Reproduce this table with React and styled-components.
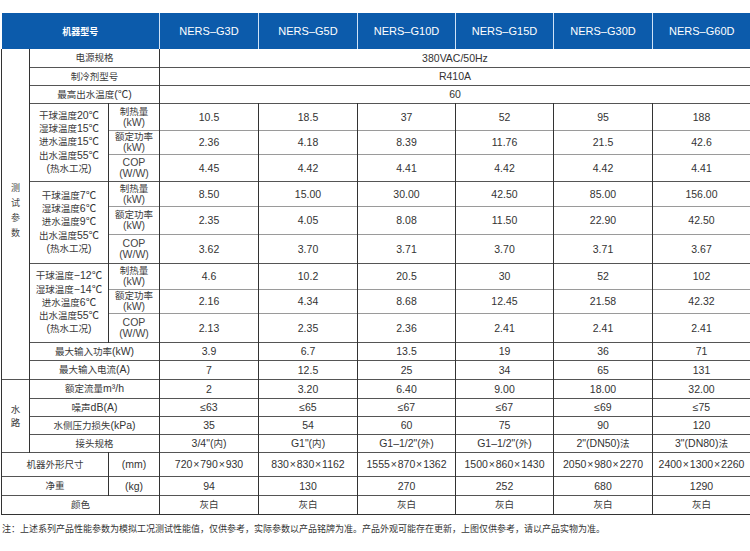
import styled, { createGlobalStyle } from "styled-components";

const GlobalStyle = createGlobalStyle`
  html, body {
    margin: 0;
    padding: 0;
    background: #fff;
    overflow: hidden;
  }
  body {
    font-family: "Liberation Sans", "Noto Sans CJK SC", sans-serif;
    color: #333;
  }
`;

const MODELS = ["NERS–G3D", "NERS–G5D", "NERS–G10D", "NERS–G15D", "NERS–G30D", "NERS–G60D"];

const COND_LINES = [
  ["干球温度20℃", "湿球温度15℃", "进水温度15℃", "出水温度55℃", "(热水工况)"],
  ["干球温度7℃", "湿球温度6℃", "进水温度9℃", "出水温度55℃", "(热水工况)"],
  ["干球温度−12℃", "湿球温度−14℃", "进水温度6℃", "出水温度55℃", "(热水工况)"],
];

const SUB = [
  ["制热量", "(kW)"],
  ["额定功率", "(kW)"],
  ["COP", "(W/W)"],
];

// values per test group, each row is one sub-row, 6 models
const GROUPS = [
  {
    heights: [27, 24, 27],
    rows: [
      ["10.5", "18.5", "37", "52", "95", "188"],
      ["2.36", "4.18", "8.39", "11.76", "21.5", "42.6"],
      ["4.45", "4.42", "4.41", "4.42", "4.42", "4.41"],
    ],
  },
  {
    heights: [25, 28, 29],
    rows: [
      ["8.50", "15.00", "30.00", "42.50", "85.00", "156.00"],
      ["2.35", "4.05", "8.08", "11.50", "22.90", "42.50"],
      ["3.62", "3.70", "3.71", "3.70", "3.71", "3.67"],
    ],
  },
  {
    heights: [26, 24, 29],
    rows: [
      ["4.6", "10.2", "20.5", "30", "52", "102"],
      ["2.16", "4.34", "8.68", "12.45", "21.58", "42.32"],
      ["2.13", "2.35", "2.36", "2.41", "2.41", "2.41"],
    ],
  },
];

const WATER = [
  { label: "额定流量m³/h", h: 19, values: ["2", "3.20", "6.40", "9.00", "18.00", "32.00"] },
  { label: "噪声dB(A)", h: 18, values: ["≤63", "≤65", "≤67", "≤67", "≤69", "≤75"] },
  { label: "水侧压力损失(kPa)", h: 18, values: ["35", "54", "60", "75", "90", "120"] },
  {
    label: "接头规格",
    h: 18,
    values: ["3/4\"(内)", "G1\"(内)", "G1–1/2\"(外)", "G1–1/2\"(外)", "2\"(DN50)法", "3\"(DN80)法"],
  },
];

const SIZES = [
  [720, 790, 930],
  [830, 830, 1162],
  [1555, 870, 1362],
  [1500, 860, 1430],
  [2050, 980, 2270],
  [2400, 1300, 2260],
];

const COL_WIDTHS = [28, 79, 51, 99, 99, 98, 98, 99, 98];

// chinese runs are set a bit smaller than the latin digits, like the print
function mix(text) {
  return text.split(/([\u3000-\u9fff\uff00-\uffef]+)/).map((part, i) =>
    i % 2 === 1 ? <Han key={i}>{part}</Han> : part
  );
}

export default function App() {
  return (
    <Page>
      <GlobalStyle />
      <Table>
        <colgroup>
          {COL_WIDTHS.map((w, i) => (
            <col key={i} style={{ width: w }} />
          ))}
        </colgroup>
        <thead>
          <HeadRow>
            <HeadCell colSpan={3} $small>
              机器型号
            </HeadCell>
            {MODELS.map((m) => (
              <HeadCell key={m}>{m}</HeadCell>
            ))}
          </HeadRow>
        </thead>
        <tbody>
          <Row $h={18} $first>
            <Cell rowSpan={14}>
              <Vertical>
                <span>测</span>
                <span>试</span>
                <span>参</span>
                <span>数</span>
              </Vertical>
            </Cell>
            <Cell colSpan={2}>{mix("电源规格")}</Cell>
            <Cell colSpan={6}>380VAC/50Hz</Cell>
          </Row>
          <Row $h={18}>
            <Cell colSpan={2}>{mix("制冷剂型号")}</Cell>
            <Cell colSpan={6}>R410A</Cell>
          </Row>
          <Row $h={18}>
            <Cell colSpan={2}>{mix("最高出水温度(℃)")}</Cell>
            <Cell colSpan={6}>60</Cell>
          </Row>
          {GROUPS.map((g, gi) =>
            g.rows.map((vals, ri) => (
              <Row key={gi + "-" + ri} $h={g.heights[ri]} $inner={ri > 0}>
                {ri === 0 && (
                  <Cell rowSpan={3}>
                    <Lines>
                      {COND_LINES[gi].map((l) => (
                        <div key={l}>{mix(l)}</div>
                      ))}
                    </Lines>
                  </Cell>
                )}
                <Cell>
                  <SubLabel>
                    <div>{mix(SUB[ri][0])}</div>
                    <div>{SUB[ri][1]}</div>
                  </SubLabel>
                </Cell>
                {vals.map((v, i) => (
                  <Cell key={i}>{v}</Cell>
                ))}
              </Row>
            ))
          )}
          <Row $h={18}>
            <Cell colSpan={2}>{mix("最大输入功率(kW)")}</Cell>
            {["3.9", "6.7", "13.5", "19", "36", "71"].map((v, i) => (
              <Cell key={i}>{v}</Cell>
            ))}
          </Row>
          <Row $h={19}>
            <Cell colSpan={2}>{mix("最大输入电流(A)")}</Cell>
            {["7", "12.5", "25", "34", "65", "131"].map((v, i) => (
              <Cell key={i}>{v}</Cell>
            ))}
          </Row>
          {WATER.map((w, wi) => (
            <Row key={w.label} $h={w.h}>
              {wi === 0 && (
                <Cell rowSpan={4}>
                  <Lines $lh={13}>
                    <div>{mix("水")}</div>
                    <div>{mix("路")}</div>
                  </Lines>
                </Cell>
              )}
              <Cell colSpan={2}>{mix(w.label)}</Cell>
              {w.values.map((v, i) => (
                <Cell key={i}>{mix(v)}</Cell>
              ))}
            </Row>
          ))}
          <Row $h={24}>
            <Cell colSpan={2}>{mix("机器外形尺寸")}</Cell>
            <Cell>(mm)</Cell>
            {SIZES.map((s, i) => (
              <Cell key={i}>{s.join("\u200a×\u200a")}</Cell>
            ))}
          </Row>
          <Row $h={19}>
            <Cell colSpan={2}>{mix("净重")}</Cell>
            <Cell>(kg)</Cell>
            {["94", "130", "270", "252", "680", "1290"].map((v, i) => (
              <Cell key={i}>{v}</Cell>
            ))}
          </Row>
          <Row $h={19} $last>
            <Cell colSpan={3}>{mix("颜色")}</Cell>
            {MODELS.map((m) => (
              <Cell key={m}>{mix("灰白")}</Cell>
            ))}
          </Row>
        </tbody>
      </Table>
      <Note>
        注：上述系列产品性能参数为模拟工况测试性能值，仅供参考，实际参数以产品铭牌为准。产品外观可能存在更新，上图仅供参考，请以产品实物为准。
      </Note>
    </Page>
  );
}

const Page = styled.div`
  width: 760px;
  padding: 13px 0 0 1px;
`;

const Table = styled.table`
  width: 749px;
  table-layout: fixed;
  border-collapse: collapse;
  font-size: 10.5px;
  color: #333;
`;

const HeadRow = styled.tr`
  height: 36px;
  background: #0c5bab;
`;

const HeadCell = styled.th`
  padding: 0;
  color: #fff;
  font-weight: ${(p) => (p.$small ? 700 : 400)};
  font-size: ${(p) => (p.$small ? "9px" : "11px")};
  text-align: center;
  border-left: 1px solid #cfe2f7;
  &:first-child {
    border-left: none;
  }
`;

const Row = styled.tr`
  height: ${(p) => p.$h}px;
  & > td {
    border-top: ${(p) => (p.$first ? "none" : `1px solid ${p.$inner ? "#9a9a9a" : "#555"}`)};
    border-bottom: ${(p) => (p.$last ? "1px solid #333" : "none")};
  }
`;

const Cell = styled.td`
  padding: 0;
  text-align: center;
  vertical-align: middle;
  border-left: 1px solid #333;
  border-right: 1px solid #333;
  line-height: 12px;
  white-space: nowrap;
`;

const Han = styled.span`
  font-size: 9.5px;
  color: #3a3a3a;
`;

const Vertical = styled.div`
  display: flex;
  flex-direction: column;
  align-items: center;
  gap: 5px;
  font-size: 9px;
  line-height: 10px;
  color: #444;
  margin-top: -6px;
`;

const Lines = styled.div`
  line-height: ${(p) => p.$lh || 12.3}px;
`;

const SubLabel = styled.div`
  line-height: 11px;
  color: #444;
`;

const Note = styled.div`
  margin-top: 8px;
  font-size: 9px;
  line-height: 12px;
  color: #333;
  padding-left: 1px;
`;
